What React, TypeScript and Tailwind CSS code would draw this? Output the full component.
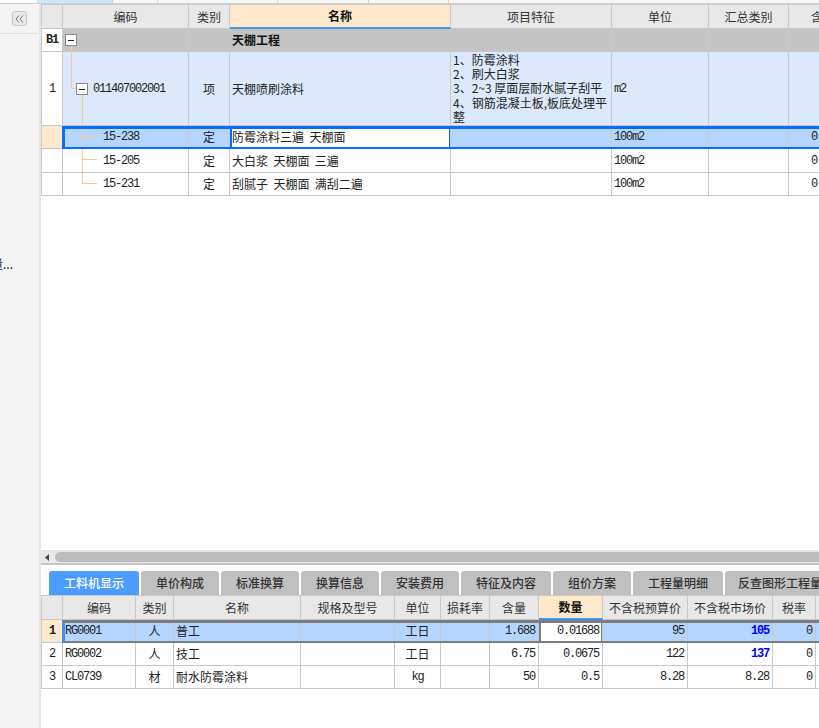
import React from "react";
import clsx from "clsx";

const mono = "font-['Liberation_Mono','Noto_Sans_CJK_SC',monospace] text-[12px] tracking-[-1.2px]";
const line = "absolute bg-[#fbc98d]";

const TW = ["w-[21px]", "w-[126px]", "w-[41px]", "w-[221px]", "w-[161px]", "w-[97px]", "w-[80px]", "w-[72px]"];
const BW = [
  "w-[21px]", "w-[73px]", "w-[38px]", "w-[127px]", "w-[94px]", "w-[46px]", "w-[49px]",
  "w-[49px]", "w-[64px]", "w-[85px]", "w-[85px]", "w-[43px]", "w-[60px]",
];

function Cell({ w, className = "", children }: { w: string; className?: string; children?: React.ReactNode }) {
  return (
    <div
      className={clsx(
        "relative flex h-full shrink-0 items-center overflow-hidden whitespace-nowrap border-r border-b border-[#c8c8c8]",
        w,
        className
      )}
    >
      {children}
    </div>
  );
}

function Box({ className }: { className: string }) {
  return (
    <div className={clsx("absolute flex h-[12px] w-[12px] items-center justify-center border border-[#8a8a8a] bg-white", className)}>
      <div className="h-px w-[6px] bg-[#222]" />
    </div>
  );
}

function Sidebar() {
  return (
    <div className="flex w-[41px] shrink-0 flex-col overflow-hidden border-r-2 border-[#e6e6e6] bg-[#f3f3f3]">
      <div className="ml-[12px] mt-[7px] flex h-[15px] w-[15px] items-center justify-center rounded-[3px] border border-[#c6c6c6] bg-[#e9e9e9]">
        <svg width="9" height="8" viewBox="0 0 9 8" fill="none" stroke="#777" strokeWidth="1">
          <polyline points="4,0.5 1,4 4,7.5" />
          <polyline points="8,0.5 5,4 8,7.5" />
        </svg>
      </div>
      <div className="mt-[7px] h-px w-[37px] bg-[#dcdcdc]" />
      <div className="-ml-[9px] mt-[224px] text-[12px] leading-[12px] text-[#222]">量...</div>
    </div>
  );
}

function TopStrip() {
  return (
    <div className="flex h-[4px] shrink-0 border-b border-[#d2d2d2] bg-[#f6f6f6]">
      <div className="w-[38px] border-r border-[#d2d2d2] bg-white" />
      <div className="w-[75px] border-r border-[#d2d2d2] bg-[#cfe6fb]" />
      <div className="w-[45px] border-r border-[#d2d2d2]" />
      <div className="w-[120px] border-r border-[#d2d2d2]" />
      <div className="w-[91px] border-r border-[#d2d2d2]" />
      <div className="w-[80px] border-r border-[#d2d2d2]" />
      <div className="flex-1" />
    </div>
  );
}

function TopTable() {
  const heads = ["", "编码", "类别", "名称", "项目特征", "单位", "汇总类别", "含量"];
  const children = [
    { code: "15-238", name: "防霉涂料三遍  天棚面", h: "h-[23px]", sel: true, last: false },
    { code: "15-205", name: "大白浆  天棚面  三遍", h: "h-[24px]", sel: false, last: false },
    { code: "15-231", name: "刮腻子  天棚面  满刮二遍", h: "h-[23px]", sel: false, last: true },
  ];
  return (
    <div className="w-max border-l border-[#c8c8c8]">
      <div className="flex h-[25px] border-t border-[#c8c8c8] bg-[#e8e8e8] text-[#333]">
        {heads.map((t, i) => (
          <Cell
            key={i}
            w={TW[i]}
            className={clsx(
              "justify-center",
              i === 3 && "border-b-2 border-b-[#3f95f2] bg-[#ffe8cc] font-bold text-[#111]",
              i === 7 && "justify-start pl-[22px]"
            )}
          >
            {t}
          </Cell>
        ))}
      </div>

      <div className="flex h-[23px] bg-[#c4c4c4]">
        <Cell w={TW[0]} className={clsx("justify-center bg-white font-bold", mono)}>B1</Cell>
        <Cell w={TW[1]}>
          <Box className="left-[2px] top-[5px]" />
          <div className={clsx(line, "left-[8px] top-[17px] -bottom-[1px] w-px")} />
        </Cell>
        <Cell w={TW[2]} />
        <Cell w={TW[3]} className="pl-[2px] font-bold text-[#111]">天棚工程</Cell>
        <Cell w={TW[4]} />
        <Cell w={TW[5]} />
        <Cell w={TW[6]} />
        <Cell w={TW[7]} />
      </div>

      <div className="flex h-[74px] bg-[#dce9fc]">
        <Cell w={TW[0]} className={clsx("justify-center bg-white", mono)}>1</Cell>
        <Cell w={TW[1]}>
          <div className={clsx(line, "left-[8px] -top-[1px] h-[37px] w-px")} />
          <div className={clsx(line, "left-[8px] top-[36px] h-px w-[5px]")} />
          <Box className="left-[13px] top-[31px]" />
          <div className={clsx(line, "left-[19px] top-[43px] -bottom-[1px] w-px")} />
          <span className={clsx("pl-[30px]", mono)}>011407002001</span>
        </Cell>
        <Cell w={TW[2]} className="justify-center">项</Cell>
        <Cell w={TW[3]} className="pl-[2px]">天棚喷刷涂料</Cell>
        <Cell w={TW[4]} className="pl-[2px]">
          <div className="flex flex-col">
            <div className="h-[14.3px] leading-[14.3px]">1、防霉涂料</div>
            <div className="h-[14.3px] leading-[14.3px]">2、刷大白浆</div>
            <div className="h-[14.3px] leading-[14.3px]">3、2~3 厚面层耐水腻子刮平</div>
            <div className="h-[14.3px] leading-[14.3px]">4、钢筋混凝土板,板底处理平</div>
            <div className="h-[14.3px] leading-[14.3px]">整</div>
          </div>
        </Cell>
        <Cell w={TW[5]} className={clsx("pl-[2px]", mono)}>m2</Cell>
        <Cell w={TW[6]} />
        <Cell w={TW[7]} />
      </div>

      {children.map((r) => (
        <div key={r.code} className={clsx("relative flex", r.h, r.sel ? "bg-[#b4d5fe]" : "bg-white")}>
          <Cell w={TW[0]} className={r.sel ? "bg-[#ffe8cc]" : ""} />
          <Cell w={TW[1]}>
            <div className={clsx(line, "left-[19px] -top-[1px] w-px", r.last ? "h-[12px]" : "-bottom-[1px]")} />
            <div className={clsx(line, "left-[19px] top-[10px] h-px w-[15px]")} />
            <span className={clsx("pl-[40px]", mono)}>{r.code}</span>
          </Cell>
          <Cell w={TW[2]} className="justify-center">定</Cell>
          <Cell w={TW[3]} className={clsx("whitespace-pre pl-[2px]", r.sel && "bg-white")}>
            {r.name}
            {r.sel && <div className="absolute -left-[1px] -right-[2px] top-0 bottom-0 border-x-[3px] border-[#0a6cff]" />}
          </Cell>
          <Cell w={TW[4]} />
          <Cell w={TW[5]} className={clsx("pl-[2px]", mono)}>100m2</Cell>
          <Cell w={TW[6]} />
          <Cell w={TW[7]} className={clsx("pl-[22px]", mono)}>0</Cell>
          {r.sel && <div className="pointer-events-none absolute left-[20px] right-0 top-0 -bottom-[1px] border-[3px] border-[#0a6cff]" />}
        </div>
      ))}
    </div>
  );
}

function Scrollbar() {
  return (
    <>
      <div className="flex h-[13px] shrink-0 items-center border-t border-[#e2e2e2] bg-[#e8e8e8]">
        <svg className="ml-[4px]" width="4" height="7" viewBox="0 0 4 7">
          <polygon points="4,0 0,3.5 4,7" fill="#444" />
        </svg>
        <div className="ml-[6px] h-[10px] flex-1 rounded-l-full bg-[#bcbcbc]" />
      </div>
      <div className="h-[2px] shrink-0 bg-[#c6c6c6]" />
    </>
  );
}

function Tabs() {
  const tabs: [string, string][] = [
    ["工料机显示", "w-[90px]"],
    ["单价构成", "w-[78px]"],
    ["标准换算", "w-[78px]"],
    ["换算信息", "w-[78px]"],
    ["安装费用", "w-[78px]"],
    ["特征及内容", "w-[90px]"],
    ["组价方案", "w-[78px]"],
    ["工程量明细", "w-[90px]"],
    ["反查图形工程量", "w-[110px]"],
  ];
  return (
    <div className="mt-[6px] flex h-[24px] shrink-0 gap-[2px] pl-[8px]">
      {tabs.map(([t, w], i) => (
        <div
          key={t}
          className={clsx(
            "flex h-full shrink-0 items-center justify-center rounded-t-[3px] text-[12px] font-medium",
            w,
            i === 0 ? "bg-[#4a9dff] text-white" : "bg-[#c0c0c0] text-[#333]"
          )}
        >
          {t}
        </div>
      ))}
    </div>
  );
}

function BottomTable() {
  const heads = ["", "编码", "类别", "名称", "规格及型号", "单位", "损耗率", "含量", "数量", "不含税预算价", "不含税市场价", "税率", ""];
  const rows = [
    ["1", "RG0001", "人", "普工", "", "工日", "", "1.688", "0.01688", "95", "105", "0"],
    ["2", "RG0002", "人", "技工", "", "工日", "", "6.75", "0.0675", "122", "137", "0"],
    ["3", "CL0739", "材", "耐水防霉涂料", "", "kg", "", "50", "0.5", "8.28", "8.28", "0"],
  ];
  return (
    <div className="w-max border-l border-[#c8c8c8]">
      <div className="flex h-[25px] border-t border-[#c8c8c8] bg-[#e8e8e8] text-[#333]">
        {heads.map((t, i) => (
          <Cell
            key={i}
            w={BW[i]}
            className={clsx("justify-center", i === 8 && "border-b-2 border-b-[#3f95f2] bg-[#ffe8cc] font-bold text-[#111]")}
          >
            {t}
          </Cell>
        ))}
      </div>
      {rows.map((r, ri) => {
        const sel = ri === 0;
        return (
          <div key={ri} className={clsx("relative flex h-[23px]", sel ? "bg-[#b4d5fe]" : "bg-white")}>
            <Cell w={BW[0]} className={clsx("justify-center", mono, sel && "bg-[#ffe8cc] font-bold")}>{r[0]}</Cell>
            <Cell w={BW[1]} className={clsx("pl-[2px]", mono)}>{r[1]}</Cell>
            <Cell w={BW[2]} className="justify-center">{r[2]}</Cell>
            <Cell w={BW[3]} className="pl-[2px]">{r[3]}</Cell>
            <Cell w={BW[4]} />
            <Cell w={BW[5]} className={clsx("justify-center", r[5] === "kg" && mono)}>{r[5]}</Cell>
            <Cell w={BW[6]} />
            <Cell w={BW[7]} className={clsx("justify-end pr-[3px]", mono)}>{r[7]}</Cell>
            <Cell w={BW[8]} className={clsx("justify-end pr-[3px]", mono, sel && "bg-white")}>
              {r[8]}
              {sel && <div className="absolute -left-[1px] -right-[2px] top-0 bottom-0 border-x-[3px] border-[#7c7c7c]" />}
            </Cell>
            <Cell w={BW[9]} className={clsx("justify-end pr-[3px]", mono)}>{r[9]}</Cell>
            <Cell
              w={BW[10]}
              className={clsx("justify-end pr-[3px]", mono, ri < 2 && "font-bold text-[#0000ff]")}
            >
              {r[10]}
            </Cell>
            <Cell w={BW[11]} className={clsx("justify-end pr-[3px]", mono)}>{r[11]}</Cell>
            <Cell w={BW[12]} />
            {sel && (
              <div className="pointer-events-none absolute left-[20px] right-0 top-0 -bottom-[1px] border-[3px] border-[#7c7c7c] border-l-[#3d8ef5]" />
            )}
          </div>
        );
      })}
    </div>
  );
}

export default function App() {
  return (
    <div className="flex h-[728px] w-[819px] flex-col overflow-hidden bg-white font-['Noto_Sans_CJK_SC','Liberation_Sans',sans-serif] text-[12px] text-[#222]">
      <TopStrip />
      <div className="flex min-h-0 flex-1">
        <Sidebar />
        <div className="flex min-w-0 flex-1 flex-col overflow-hidden">
          <TopTable />
          <div className="flex-1" />
          <div className="flex h-[178px] shrink-0 flex-col">
            <Scrollbar />
            <Tabs />
            <BottomTable />
          </div>
        </div>
      </div>
    </div>
  );
}
